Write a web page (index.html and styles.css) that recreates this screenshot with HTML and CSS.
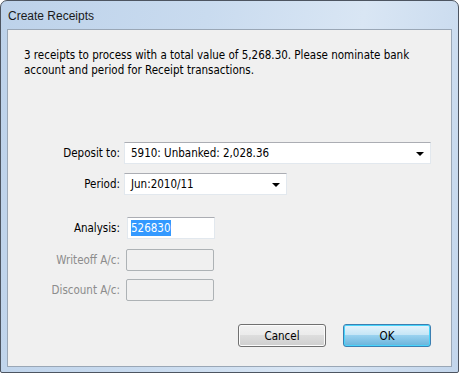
FILE: index.html
```html
<!DOCTYPE html>
<html lang="en">

<head>
    <meta charset="UTF-8">
    <title>Create Receipts</title>
    <link rel="stylesheet" href="styles.css">
</head>

<body>
    <!-- dialog frame -->
    <div class="window">
        <div class="titlebar">Create Receipts</div>
        <div class="client">
            <p class="intro">3 receipts to process with a total value of 5,268.30. Please nominate bank account and period for Receipt transactions.</p>

            <!-- form fields -->
            <div class="form">
                <div class="row">
                    <label class="lbl">Deposit to:</label>
                    <div class="combo combo_wide">
                        <span>5910: Unbanked: 2,028.36</span>
                        <span class="arrow"></span>
                    </div>
                </div>
                <div class="row row_period">
                    <label class="lbl">Period:</label>
                    <div class="combo combo_short">
                        <span>Jun:2010/11</span>
                        <span class="arrow"></span>
                    </div>
                </div>
                <div class="row row_analysis">
                    <label class="lbl">Analysis:</label>
                    <div class="field"><span class="sel">526830</span></div>
                </div>
                <div class="row row_writeoff">
                    <label class="lbl off">Writeoff A/c:</label>
                    <div class="field field_off"></div>
                </div>
                <div class="row row_discount">
                    <label class="lbl off">Discount A/c:</label>
                    <div class="field field_off"></div>
                </div>
            </div>

            <!-- buttons -->
            <div class="buttons">
                <button class="btn">Cancel</button>
                <button class="btn btn_ok">OK</button>
            </div>
        </div>
    </div>
</body>

</html>
```

FILE: styles.css
```css
* {
    box-sizing: border-box;
}

body {
    margin: 0;
    font-family: "DejaVu Sans Condensed", "DejaVu Sans", sans-serif;
    font-stretch: condensed;
    font-size: 11px;
    color: #000;
}

.window {
    width: 459px;
    height: 373px;
    border: 1px solid #4d5561;
    border-radius: 7px 7px 2px 2px;
    padding: 0 6px 5px 6px;
    background: linear-gradient(100deg, #bdd2ea 0%, #c9dbef 40%, #d9e6f4 70%, #c3d6ec 100%);
    display: flex;
    flex-direction: column;
}

.titlebar {
    height: 28px;
    padding: 8px 0 0 1px;
    font-family: "Liberation Sans", sans-serif;
    font-stretch: normal;
    font-size: 12px;
    color: #1a1a1a;
}

.client {
    flex: 1;
    background: #f0f0f0;
    border: 1px solid #9aa7b6;
    display: flex;
    flex-direction: column;
}

.intro {
    margin: 0;
    padding: 18px 16px 0 16px;
    line-height: 15px;
    font-size: 11.5px;
}

.form {
    margin-top: 64px;
    display: flex;
    flex-direction: column;
}

.row {
    display: flex;
    align-items: center;
    height: 22px;
}

.row_period {
    margin-top: 9px;
}

.row_analysis {
    margin-top: 22px;
}

.row_writeoff {
    margin-top: 10px;
}

.row_discount {
    margin-top: 8px;
}

.lbl {
    width: 112px;
    text-align: right;
    font-size: 11.5px;
}

.off {
    color: #8c8c8c;
}

.combo {
    margin-left: 4px;
    height: 22px;
    background: #fff;
    border: 1px solid #e2e8ee;
    border-top-color: #abadb3;
    display: flex;
    align-items: center;
    justify-content: space-between;
    padding: 0 6px 0 6px;
    font-size: 11.5px;
}

.combo_wide {
    width: 307px;
}

.combo_short {
    width: 163px;
}

.arrow {
    width: 0;
    height: 0;
    border-left: 4px solid transparent;
    border-right: 4px solid transparent;
    border-top: 4px solid #000;
    margin-top: 2px;
}

.field {
    margin-left: 7px;
    width: 88px;
    height: 22px;
    background: #fff;
    border: 1px solid #e2e8ee;
    border-top-color: #abadb3;
    padding: 3px 0 0 3px;
    font-size: 11.5px;
}

.field_off {
    margin-left: 6px;
    background: #f0f0f0;
    border: 1px solid #adb2b5;
    border-radius: 2px;
}

.sel {
    background: #3399ff;
    color: #fff;
    padding: 1px 0;
}

.buttons {
    margin-top: auto;
    margin-bottom: 19px;
    display: flex;
    justify-content: flex-end;
    gap: 17px;
    padding-right: 20px;
}

.btn {
    width: 88px;
    height: 23px;
    font-family: inherit;
    font-stretch: condensed;
    font-size: 11.5px;
    color: #000;
    border: 1px solid #707070;
    border-radius: 3px;
    background: linear-gradient(#f2f2f2 0%, #ebebeb 48%, #dddddd 50%, #cfcfcf 100%);
    box-shadow: inset 0 0 0 1px #fcfcfc;
    padding: 0;
}

.btn_ok {
    border-color: #3c7fb1;
    background: linear-gradient(#e5f4fc 0%, #c4e5f6 48%, #98d1ef 50%, #68b3db 100%);
    box-shadow: inset 0 0 0 1px #48d4fb;
}
```
